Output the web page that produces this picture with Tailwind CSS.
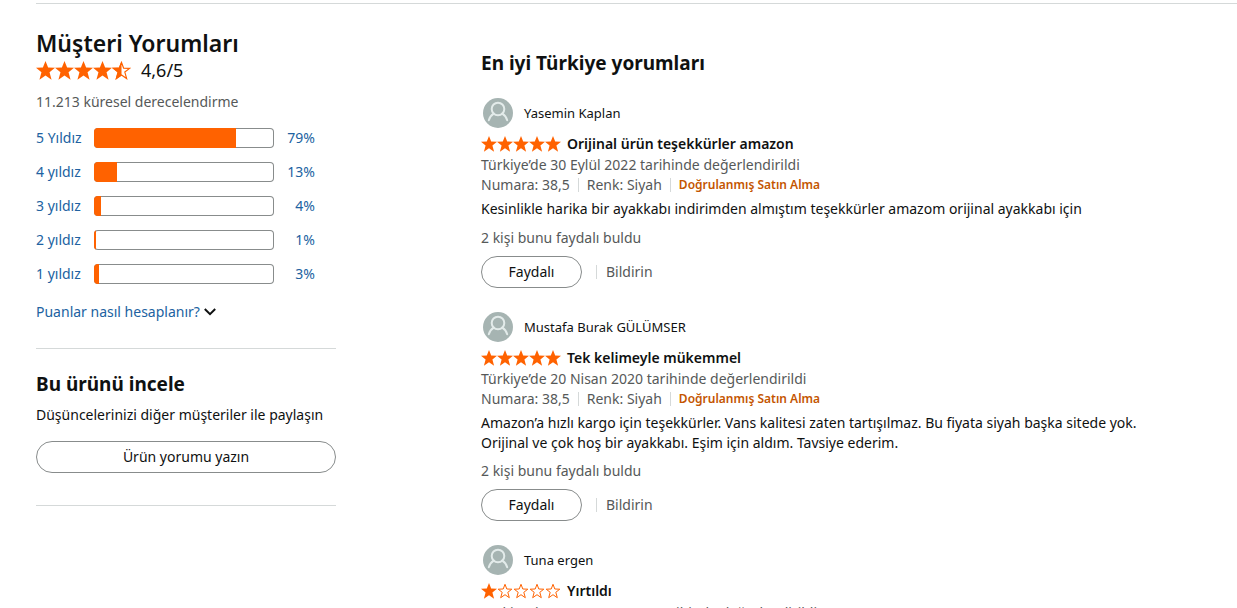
<!DOCTYPE html>
<html lang="tr">
<head>
    <meta charset="UTF-8">
    <meta name="viewport" content="width=device-width, initial-scale=1.0">
    <title>Müşteri Yorumları</title>
    <script src="https://cdn.jsdelivr.net/npm/@tailwindcss/browser@4"></script>
</head>
<body class="bg-white text-[#0f1111] text-sm leading-5 font-['Noto_Sans',sans-serif]">

    <!-- Shared icons -->
    <svg class="hidden" aria-hidden="true">
        <symbol id="star" viewBox="0 0 16 16">
            <path fill="#ff6200" d="M8 0l2.200 5.500 5.800.2-4.600 3.700 1.700 6.300L8 12.300l-5.100 3.400 1.700-6.300L0 5.700l5.800-.2z"/>
        </symbol>
        <symbol id="star-empty" viewBox="0 0 16 16">
            <path fill="none" stroke="#ff6200" stroke-width="1" d="M8 1.300l1.800 4.700 5 .2-4 3.100 1.500 5.400L8 11.700l-4.300 3 1.500-5.400-4-3.100 5-.2z"/>
        </symbol>
        <symbol id="star-half" viewBox="0 0 16 16">
            <path fill="none" stroke="#ff6200" stroke-width="1" d="M8 1.300l1.800 4.700 5 .2-4 3.100 1.500 5.400L8 11.700l-4.300 3 1.500-5.400-4-3.100 5-.2z"/>
            <path fill="#ff6200" d="M8 0v12.300l-5.100 3.400 1.700-6.300L0 5.700l5.800-.2z"/>
        </symbol>
        <symbol id="avatar" viewBox="0 0 30 30">
            <circle cx="15" cy="15" r="15" fill="#a6b4b2"/>
            <g fill="none" stroke="#e3ebea" stroke-width="2" stroke-linecap="round">
                <circle cx="15" cy="11" r="6.300"/>
                <path d="M5.800 22.300c.8-3 2.400-5.200 5-6.700M24.200 22.300c-.8-3-2.400-5.200-5-6.700"/>
            </g>
        </symbol>
    </svg>

    <hr class="mt-[3px] ml-9 border-[#d5d9d9]">

    <main class="flex gap-[145px] pl-9 pr-[100px]">

        <!-- Rating summary -->
        <aside class="w-[300px] shrink-0 pt-[23px]">
            <h1 class="text-[23px] leading-8 font-semibold">Müşteri Yorumları</h1>
            <div class="flex items-center gap-[10px] h-[22px]">
                <div class="flex" role="img" aria-label="5 yıldız üzerinden 4,6">
                    <svg class="size-[19px]"><use href="#star"/></svg>
                    <svg class="size-[19px]"><use href="#star"/></svg>
                    <svg class="size-[19px]"><use href="#star"/></svg>
                    <svg class="size-[19px]"><use href="#star"/></svg>
                    <svg class="size-[19px]"><use href="#star-half"/></svg>
                </div>
                <span class="text-lg leading-6">4,6/5</span>
            </div>
            <p class="mt-[11px] text-[#565959]">11.213 küresel derecelendirme</p>

            <div class="mt-4 flex flex-col gap-[14px] text-[#2162a1]">
                <a href="#" class="flex items-center">
                    <span class="w-[58px]">5 Yıldız</span>
                    <span class="w-[180px] h-5 inset-ring inset-ring-[#888c8c] rounded-sm overflow-hidden"><span class="block h-full bg-[#ff6200]" style="width: 79%"></span></span>
                    <span class="w-[41px] text-right">79%</span>
                </a>
                <a href="#" class="flex items-center">
                    <span class="w-[58px]">4 yıldız</span>
                    <span class="w-[180px] h-5 inset-ring inset-ring-[#888c8c] rounded-sm overflow-hidden"><span class="block h-full bg-[#ff6200]" style="width: 13%"></span></span>
                    <span class="w-[41px] text-right">13%</span>
                </a>
                <a href="#" class="flex items-center">
                    <span class="w-[58px]">3 yıldız</span>
                    <span class="w-[180px] h-5 inset-ring inset-ring-[#888c8c] rounded-sm overflow-hidden"><span class="block h-full bg-[#ff6200]" style="width: 4%"></span></span>
                    <span class="w-[41px] text-right">4%</span>
                </a>
                <a href="#" class="flex items-center">
                    <span class="w-[58px]">2 yıldız</span>
                    <span class="w-[180px] h-5 inset-ring inset-ring-[#888c8c] rounded-sm overflow-hidden"><span class="block h-full bg-[#ff6200]" style="width: 1%"></span></span>
                    <span class="w-[41px] text-right">1%</span>
                </a>
                <a href="#" class="flex items-center">
                    <span class="w-[58px]">1 yıldız</span>
                    <span class="w-[180px] h-5 inset-ring inset-ring-[#888c8c] rounded-sm overflow-hidden"><span class="block h-full bg-[#ff6200]" style="width: 3%"></span></span>
                    <span class="w-[41px] text-right">3%</span>
                </a>
            </div>

            <a href="#" class="mt-[18px] flex items-center gap-1 text-[#2162a1]">
                Puanlar nasıl hesaplanır?
                <svg class="w-3 h-2" viewBox="0 0 12 8" fill="none" stroke="#0f1111" stroke-width="2"><path d="M.8 1L6 6.200 11.200 1"/></svg>
            </a>

            <hr class="mt-[26px] border-[#d5d9d9]">

            <h2 class="mt-[21px] text-[19px] leading-7 font-bold">Bu ürünü incele</h2>
            <p class="mt-[7px]">Düşüncelerinizi diğer müşteriler ile paylaşın</p>
            <button type="button" class="mt-4 w-full h-8 border border-[#888c8c] rounded-full">Ürün yorumu yazın</button>
            <hr class="mt-8 border-[#d5d9d9]">
        </aside>

        <!-- Reviews -->
        <section class="flex-1 min-w-0 pt-[45px]">
            <h2 class="text-[19px] leading-7 font-bold">En iyi Türkiye yorumları</h2>

            <article class="mt-[21px]">
                <div class="flex items-center gap-[11px] pl-[2px] text-[13px]">
                    <svg class="size-[30px]"><use href="#avatar"/></svg>
                    <span>Yasemin Kaplan</span>
                </div>
                <div class="mt-[6px] flex items-center gap-[6px]">
                    <div class="flex" role="img" aria-label="5 yıldız">
                        <svg class="size-4"><use href="#star"/></svg>
                        <svg class="size-4"><use href="#star"/></svg>
                        <svg class="size-4"><use href="#star"/></svg>
                        <svg class="size-4"><use href="#star"/></svg>
                        <svg class="size-4"><use href="#star"/></svg>
                    </div>
                    <h3 class="font-semibold">Orijinal ürün teşekkürler amazon</h3>
                </div>
                <p class="mt-px text-[#565959]">Türkiye’de 30 Eylül 2022 tarihinde değerlendirildi</p>
                <div class="flex items-center text-[#565959]">
                    <span>Numara: 38,5</span>
                    <span class="mx-2 h-[14px] w-px bg-[#d5d9d9]"></span>
                    <span>Renk: Siyah</span>
                    <span class="mx-2 h-[14px] w-px bg-[#d5d9d9]"></span>
                    <span class="text-xs font-semibold text-[#c45500]">Doğrulanmış Satın Alma</span>
                </div>
                <p class="mt-1">Kesinlikle harika bir ayakkabı indirimden almıştım teşekkürler amazom orijinal ayakkabı için</p>
                <p class="mt-[9px] text-[#565959]">2 kişi bunu faydalı buldu</p>
                <div class="mt-2 flex items-center">
                    <button type="button" class="w-[101px] h-8 border border-[#888c8c] rounded-full">Faydalı</button>
                    <span class="ml-[14px] mr-[9px] h-[14px] w-px bg-[#d5d9d9]"></span>
                    <a href="#" class="text-[#565959]">Bildirin</a>
                </div>
            </article>

            <article class="mt-6">
                <div class="flex items-center gap-[11px] pl-[2px] text-[13px]">
                    <svg class="size-[30px]"><use href="#avatar"/></svg>
                    <span>Mustafa Burak GÜLÜMSER</span>
                </div>
                <div class="mt-[6px] flex items-center gap-[6px]">
                    <div class="flex" role="img" aria-label="5 yıldız">
                        <svg class="size-4"><use href="#star"/></svg>
                        <svg class="size-4"><use href="#star"/></svg>
                        <svg class="size-4"><use href="#star"/></svg>
                        <svg class="size-4"><use href="#star"/></svg>
                        <svg class="size-4"><use href="#star"/></svg>
                    </div>
                    <h3 class="font-semibold">Tek kelimeyle mükemmel</h3>
                </div>
                <p class="mt-px text-[#565959]">Türkiye’de 20 Nisan 2020 tarihinde değerlendirildi</p>
                <div class="flex items-center text-[#565959]">
                    <span>Numara: 38,5</span>
                    <span class="mx-2 h-[14px] w-px bg-[#d5d9d9]"></span>
                    <span>Renk: Siyah</span>
                    <span class="mx-2 h-[14px] w-px bg-[#d5d9d9]"></span>
                    <span class="text-xs font-semibold text-[#c45500]">Doğrulanmış Satın Alma</span>
                </div>
                <p class="mt-1">Amazon’a hızlı kargo için teşekkürler. Vans kalitesi zaten tartışılmaz. Bu fiyata siyah başka sitede yok.<br>Orijinal ve çok hoş bir ayakkabı. Eşim için aldım. Tavsiye ederim.</p>
                <p class="mt-2 text-[#565959]">2 kişi bunu faydalı buldu</p>
                <div class="mt-2 flex items-center">
                    <button type="button" class="w-[101px] h-8 border border-[#888c8c] rounded-full">Faydalı</button>
                    <span class="ml-[14px] mr-[9px] h-[14px] w-px bg-[#d5d9d9]"></span>
                    <a href="#" class="text-[#565959]">Bildirin</a>
                </div>
            </article>

            <article class="mt-6">
                <div class="flex items-center gap-[11px] pl-[2px] text-[13px]">
                    <svg class="size-[30px]"><use href="#avatar"/></svg>
                    <span>Tuna ergen</span>
                </div>
                <div class="mt-[6px] flex items-center gap-[6px]">
                    <div class="flex" role="img" aria-label="1 yıldız">
                        <svg class="size-4"><use href="#star"/></svg>
                        <svg class="size-4"><use href="#star-empty"/></svg>
                        <svg class="size-4"><use href="#star-empty"/></svg>
                        <svg class="size-4"><use href="#star-empty"/></svg>
                        <svg class="size-4"><use href="#star-empty"/></svg>
                    </div>
                    <h3 class="font-semibold">Yırtıldı</h3>
                </div>
                <p class="mt-[2px] text-[#565959]">Türkiye’de 8 Temmuz 2021 tarihinde değerlendirildi</p>
            </article>
        </section>
    </main>

</body>
</html>
